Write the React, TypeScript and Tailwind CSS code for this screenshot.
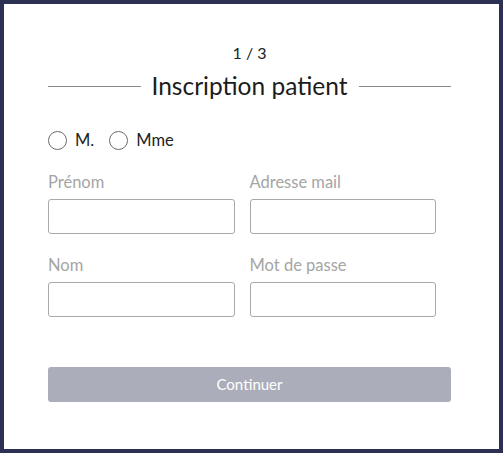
import React from 'react';

const Field: React.FC<{ label: string; type?: string }> = ({ label, type = 'text' }) => (
  <div className="pr-[15px]">
    <label className="block text-[16.5px] leading-[20px] text-[#a5a5a5]">{label}</label>
    <input
      type={type}
      className="mt-[7px] block w-full h-[35px] rounded-[3px] border border-[#a9a9a9] bg-white px-2 outline-none"
    />
  </div>
);

const Radio: React.FC<{ label: string }> = ({ label }) => (
  <label className="flex items-center gap-[8px] cursor-pointer">
    <span className="w-[19px] h-[19px] rounded-full border-[1.5px] border-[#6b6b6b] bg-white"></span>
    <span className="text-[16.5px] leading-[20px] text-[#222]">{label}</span>
  </label>
);

export default function App() {
  return (
    <div className="w-[503px] h-[453px] bg-[#2c3052] p-[4px]" style={{ fontFamily: 'Lato, "Open Sans", sans-serif' }}>
      <div className="h-full bg-white pl-[44px] pr-[48px] pt-[39px]">
        <p className="text-center text-[16px] leading-[20px] text-[#222]">1 / 3</p>

        <div className="mt-[8px] flex items-center gap-[11px]">
          <div className="flex-1 h-px bg-[#8a8a8a]"></div>
          <h1 className="text-[24.5px] leading-[30px] text-[#1c1c1c]">Inscription patient</h1>
          <div className="flex-1 h-px bg-[#8a8a8a]"></div>
        </div>

        <div className="mt-[29px] flex items-center gap-[15px]">
          <Radio label="M." />
          <Radio label="Mme" />
        </div>

        <div className="mt-[22px] grid grid-cols-2">
          <Field label="Prénom" />
          <Field label="Adresse mail" type="email" />
        </div>

        <div className="mt-[21px] grid grid-cols-2">
          <Field label="Nom" />
          <Field label="Mot de passe" type="password" />
        </div>

        <button className="mt-[50px] w-full h-[35px] rounded-[3px] bg-[#abaeba] text-[15px] text-white">
          Continuer
        </button>
      </div>
    </div>
  );
}
